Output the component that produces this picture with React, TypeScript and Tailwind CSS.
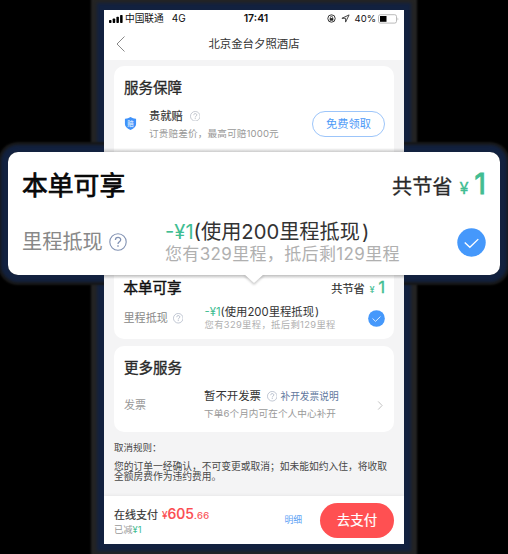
import React from "react";

function Help({ className }: { className: string }) {
  return (
    <svg viewBox="0 0 18 18" fill="none" stroke="currentColor" className={className}>
      <circle cx="9" cy="9" r="8.2" strokeWidth="1.1" />
      <path d="M6.4 7.1C6.4 3.5 11.7 3.7 11.7 6.8C11.7 8.8 9 8.8 9 11" strokeWidth="1.3" />
      <path d="M9 12.3V13.8" strokeWidth="1.4" />
    </svg>
  );
}

function Check({ className }: { className: string }) {
  return (
    <svg viewBox="0 0 30 30" fill="none" className={className}>
      <circle cx="15" cy="15" r="14.7" fill="#4598fb" />
      <path d="M8 15L13.3 20L22 11.5" stroke="white" strokeWidth="1.4" />
    </svg>
  );
}

function StatusBar() {
  return (
    <div className="flex h-[17px] items-center pl-[5px] pr-[5px] text-[10px] leading-[17px] text-[#111]">
      <svg viewBox="0 0 14 8" className="h-2 w-[14px]">
        <rect x="0" y="5" width="2.5" height="3" rx=".7" />
        <rect x="3.7" y="3.5" width="2.5" height="4.5" rx=".7" />
        <rect x="7.4" y="1.8" width="2.5" height="6.2" rx=".7" />
        <rect x="11.1" y="0" width="2.5" height="8" rx=".7" />
      </svg>
      <span className="ml-[2px] text-[9.7px]">中国联通</span>
      <span className="ml-[8px]">4G</span>
      <span className="ml-[58px] text-[10.5px] font-semibold">17:41</span>
      <svg viewBox="0 0 10 10" className="ml-auto size-[9px]" fill="none" stroke="#222">
        <circle cx="5" cy="5" r="4.1" strokeWidth="1" />
        <rect x="3" y="4.6" width="4" height="2.8" fill="#222" stroke="none" />
        <path d="M3.8 4.8V3.8a1.2 1.2 0 0 1 2.4 0v1" strokeWidth=".8" />
      </svg>
      <svg viewBox="0 0 10 10" className="ml-[5px] size-[9px]" fill="none" stroke="#333" strokeWidth="1" strokeLinejoin="round">
        <path d="M9 1L1 4.8H5.1V9Z" />
      </svg>
      <span className="ml-[5px] text-[9.5px]">40%</span>
      <svg viewBox="0 0 21 10" className="ml-[2px] h-[10px] w-[21px]">
        <rect x=".5" y=".7" width="18" height="8.4" rx="1.8" fill="white" stroke="#aaa" strokeWidth=".8" />
        <rect x="2" y="2" width="6.5" height="5.8" fill="#000" />
        <path d="M19.7 3.5Q21 5 19.7 6.4Z" fill="#999" />
      </svg>
    </div>
  );
}

function Guarantee() {
  return (
    <section className="h-[104px] rounded-[10px] bg-white pl-[10px] pr-[9px] pt-[12px]">
      <h2 className="text-[14.5px] leading-5 text-[#292929] [-webkit-text-stroke:0.3px]">服务保障</h2>
      <div className="flex pt-[10px]">
        <svg viewBox="0 0 14 15" className="mt-[8px] h-[15px] w-[13px]">
          <path d="M7 .5Q10 2.5 13 2.3V8Q13 12 7 14.5Q1 12 1 8V2.3Q4 2.5 7 .5Z" fill="#3f92fa" />
          <text x="7" y="10" textAnchor="middle" fontSize="7" fill="white">赔</text>
        </svg>
        <div className="ml-3 grow whitespace-nowrap">
          <div className="flex items-center text-[11.3px] leading-4 text-[#333] [-webkit-text-stroke:0.15px]">
            贵就赔<Help className="ml-[7px] size-[10.5px] text-[#aab1bc]" />
          </div>
          <p className="mt-[2px] text-[9.6px] leading-4 text-[#999] tracking-[0.15px]">订贵赔差价，最高可赔1000元</p>
        </div>
        <button className="mt-[3px] h-[26px] w-[73px] shrink-0 rounded-full border border-[#9cc5fa] text-[11.2px] leading-[24px] text-[#4d9af7]">免费领取</button>
      </div>
    </section>
  );
}

function Savings() {
  return (
    <section className="h-[169px] rounded-[10px] bg-white pl-[9.5px] pr-[9px] pt-[108px]">
      <div className="flex h-5 items-center justify-between">
        <h2 className="text-[14.5px] leading-5 text-[#111] [-webkit-text-stroke:0.5px]">本单可享</h2>
        <div className="flex items-baseline text-[11.2px] leading-5 text-[#333] [-webkit-text-stroke:0.2px]">
          共节省<span className="ml-[5px] text-[8.5px] text-[#41bd92]">¥</span><span className="ml-[4px] text-[16px] text-[#41bd92] [-webkit-text-stroke:0.4px]">1</span>
        </div>
      </div>
      <div className="flex h-[41px] items-center whitespace-nowrap">
        <span className="flex w-[81px] items-center text-[11.1px] text-[#888]">里程抵现<Help className="ml-[5px] size-[10.5px] text-[#a1aabd]" /></span>
        <div>
          <p className="text-[11.35px] leading-[13px] text-[#333]"><span className="text-[#41bd92]">-¥1</span>(使用200里程抵现<span className="ml-[1px]">)</span></p>
          <p className="text-[9.3px] leading-[12px] tracking-[0.37px] text-[#b0b0b0]">您有329里程，抵后剩129里程</p>
        </div>
        <Check className="ml-auto size-[17px]" />
      </div>
    </section>
  );
}

function MoreServices() {
  return (
    <section className="mt-[7px] h-[86px] rounded-[10px] bg-white pl-[10px] pr-[11px] pt-[12px]">
      <h2 className="text-[14.5px] leading-5 text-[#292929] [-webkit-text-stroke:0.35px]">更多服务</h2>
      <div className="flex items-center whitespace-nowrap pt-[10px]">
        <span className="w-[80px] text-[11px] text-[#999]">发票</span>
        <div>
          <p className="flex items-center text-[11.4px] leading-[17px] text-[#333]">暂不开发票<Help className="ml-[6px] size-[10.5px] text-[#a1aabd]" /><span className="ml-[3px] text-[9.7px] text-[#62789e]">补开发票说明</span></p>
          <p className="text-[9.6px] leading-[17px] tracking-[0.1px] text-[#999]">下单6个月内可在个人中心补开</p>
        </div>
        <svg viewBox="0 0 6 10" className="ml-auto h-[9px] w-[6px]" fill="none" stroke="#bbb"><path d="M1 .5L5.3 5L1 9.5" /></svg>
      </div>
    </section>
  );
}

function Callout() {
  return (
    <section className="absolute left-2 top-[152px] z-30 h-[123px] w-[492px] rounded-[10px] bg-white px-[14px] pt-[16px]">
      <div className="flex h-9 items-center justify-between whitespace-nowrap">
        <h2 className="text-[25.8px] leading-9 text-[#080808] [-webkit-text-stroke:0.75px]">本单可享</h2>
        <div className="flex items-baseline text-[20.2px] leading-9 text-[#292929] [-webkit-text-stroke:0.3px]">
          共节省<span className="ml-[7px] text-[16.5px] text-[#41bd92]">¥</span><span className="ml-[6px] text-[28px] text-[#41bd92] [-webkit-text-stroke:1px]">1</span>
        </div>
      </div>
      <div className="flex items-center whitespace-nowrap pt-[15px]">
        <span className="flex w-[143px] items-center text-[20.2px] leading-[46px] text-[#888]">里程抵现<Help className="ml-[6px] size-[18px] text-[#8292b3]" /></span>
        <div>
          <p className="text-[20.2px] leading-[24px] text-[#333]"><span className="text-[#41bd92]">-¥1</span>(使用200里程抵现<span className="ml-[2px]">)</span></p>
          <p className="text-[17px] leading-[21px] tracking-[0.35px] text-[#b0b0b0]">您有329里程，抵后剩129里程</p>
        </div>
        <Check className="ml-auto size-[29px]" />
      </div>
      <svg viewBox="0 0 20 10" className="absolute left-[236px] top-[122px] h-[10px] w-5 drop-shadow-[0_2px_1px_rgba(0,0,0,0.2)]"><path d="M0 0H20L10 9Z" fill="white" /></svg>
    </section>
  );
}

export default function App() {
  return (
    <div className="relative h-[554px] w-[508px] overflow-hidden bg-black pl-[104px] pt-[10px] font-[Inter,'Noto_Sans_CJK_SC',sans-serif]">
      <div className="absolute left-[104px] top-[10px] h-[534px] w-[300px] shadow-[0_0_3px_7px_#12213f,0_0_2px_13px_#242424]" />
      <div className="absolute left-2 top-[152px] h-[123px] w-[492px] rounded-[10px] shadow-[0_0_3px_7px_#12213f,0_0_2px_10px_#181818]" />
      <main className="relative flex h-[534px] w-[300px] flex-col overflow-hidden bg-[#f4f4f5]">
        <header className="h-[50px] shrink-0 bg-white">
          <StatusBar />
          <div className="relative flex h-[33px] items-center justify-center pt-[2px] text-[11.4px] text-[#333]">
            <svg viewBox="0 0 9 16" className="absolute left-[12px] top-[9px] h-4 w-[9px]" fill="none" stroke="#888"><path d="M8.5 .5L1 8L8.5 15.5" /></svg>
            北京金台夕照酒店
          </div>
        </header>
        <div className="grow px-[10px] pt-[6px]">
          <Guarantee />
          <Savings />
          <MoreServices />
          <div className="whitespace-nowrap pt-[10px] text-[9.75px] leading-[10px] text-[#484848]">
            <p className="text-[9.5px] leading-[12px]">取消规则：</p>
            <p className="mt-[8px]">您的订单一经确认，不可变更或取消；如未能如约入住，将收取</p>
            <p>全额房费作为违约费用。</p>
          </div>
        </div>
        <footer className="flex h-[48px] shrink-0 items-center bg-white pl-[10px] pr-[10px] shadow-[0_-1px_3px_rgba(0,0,0,0.05)]">
          <div className="grow">
            <p className="flex items-baseline text-[11px] leading-[17px] text-[#333] [-webkit-text-stroke:0.15px]">在线支付<span className="ml-[4px] text-[10px] text-[#fb4b50]">¥</span><span className="text-[14px] font-medium text-[#fb4b50]">605</span><span className="text-[9.5px] tracking-[0.4px] text-[#fb4b50]">.66</span></p>
            <p className="text-[9.3px] leading-[12px] text-[#999]">已减<span className="text-[#41bd92]">¥1</span></p>
          </div>
          <span className="mr-[18px] text-[8.8px] text-[#5ca2f5]">明细</span>
          <button className="h-[35px] w-[74px] rounded-full bg-[#ff5052] text-[13.5px] text-white [-webkit-text-stroke:0.2px]">去支付</button>
        </footer>
        <div className="absolute left-0 top-[138px] h-1 w-full bg-linear-to-b from-transparent to-black/20" />
        <div className="absolute left-0 top-[265px] h-1 w-full bg-linear-to-t from-transparent to-black/25" />
      </main>
      <Callout />
    </div>
  );
}
